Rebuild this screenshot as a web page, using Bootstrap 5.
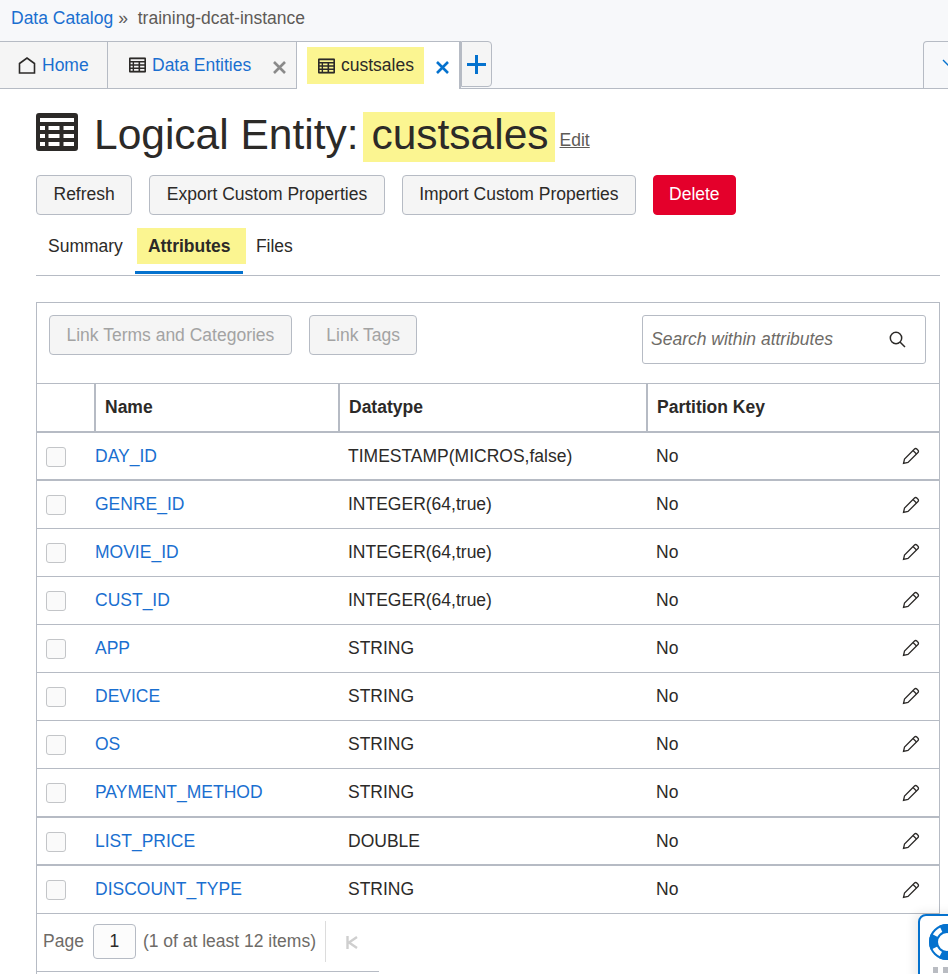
<!DOCTYPE html>
<html lang="en">
<head>
    <meta charset="UTF-8">
    <meta name="viewport" content="width=device-width, initial-scale=1.0">
    <title>Logical Entity: custsales</title>
    <link href="https://cdn.jsdelivr.net/npm/bootstrap@5.3.0/dist/css/bootstrap.min.css" rel="stylesheet">
    <style>
        html, body { height: 974px; overflow: hidden; }
        body {
            font-family: "Liberation Sans", Arial, sans-serif;
            font-size: 17.5px;
            color: #2c2a28;
            background: #fff;
        }
        a { color: #1a6fd0; text-decoration: none; }
        .hl { background: #fbf591; }

        .top-area { background: #f7f8fa; height: 89px; border-bottom: 1px solid #b6bbc4; }
        .crumbs { height: 41px; padding: 0 11px; line-height: 37px; color: #5e5b57; white-space: nowrap; }
        .crumbs .sep { margin: 0 5px; }
        .tab-row { height: 47px; }
        .tab-item {
            height: 47px;
            border-top: 1px solid #b6bbc4;
            border-right: 1px solid #b6bbc4;
            background: #f5f5f5;
            white-space: nowrap;
        }
        .tab-home { width: 108px; padding-left: 18px; }
        .tab-entities { width: 189px; padding-left: 21px; }
        .tab-active { width: 164px; padding-left: 10px; background: #fff; height: 48px; border-right-width: 2px; }
        .tab-label { height: 37px; width: 117px; padding-left: 11px; color: #2c2a28; }
        .tab-icon { margin-right: 6px; }
        .tab-x { margin: 4px 10px 0 auto; }
        .tab-add {
            width: 31px; height: 46px;
            border: 1px solid #b6bbc4;
            border-radius: 0 4px 4px 0; background: #f5f5f5;
        }
        .tab-far {
            width: 40px; height: 47px; margin-left: auto; margin-right: -15px;
            border: 1px solid #b6bbc4; border-bottom: 0; border-radius: 4px 0 0 0;
        }

        .page-body { padding: 0 8px 0 36px; }
        .title-row { height: 86px; padding-top: 23px; }
        .title-icon { margin: 1px 16px 0 0; }
        .title-text { font-size: 42.5px; line-height: 46px; margin: 0; font-weight: 400; color: #2c2a28; white-space: nowrap; }
        .title-name { display: inline-block; padding: 0 6px 4px 8px; margin-left: -7px; }
        .edit-link { color: #5e5b57; text-decoration: underline; margin: 15px 0 0 5px; }

        .act-btn {
            height: 40px; padding: 0 16.5px; font-size: 17.5px; line-height: 36px;
            color: #2c2a28; background: #f5f5f5;
            border: 1px solid #b6bbc4; border-radius: 4px;
            margin-right: 17px;
        }
        .act-btn:disabled { color: #a3a3a3; background: #f5f5f5; border-color: #b6bbc4; opacity: 1; }
        .btn-del { background: #e4002b; border-color: #e4002b; color: #fff; padding: 0 15px; }
        .action-row .act-btn { padding-bottom: 2px; }

        .sub-tabs { height: 61px; border-bottom: 1px solid #b6bbc4; padding-top: 13px; }
        .sub-tab { height: 37px; line-height: 36px; color: #2c2a28; }
        .sub-wrap { height: 46px; }
        .sub-current { width: 108px; border-bottom: 3px solid #0572ce; }
        .sub-current span { display: block; width: 109px; margin-left: 2px; padding-left: 11px; font-weight: 700; }
        .sub-files { margin-left: 9px; }

        .table-box { margin-top: 26px; border: 1px solid #b6bbc4; border-bottom: 0; height: 700px; }
        .tool-row { height: 81px; padding: 12px 13px 0 12px; border-bottom: 1px solid #b6bbc4; }
        .search-box {
            width: 284px; height: 49px; margin-left: auto;
            border: 1px solid #b6bbc4; border-radius: 3px;
            padding: 0 19px 0 8px;
            font-style: italic; color: #6e6b67;
        }

        .attr-table { table-layout: fixed; width: 902px; margin: 0; border-collapse: collapse; }
        .attr-table th, .attr-table td {
            height: 48px; padding: 0 0 0 9px; vertical-align: middle;
            border-bottom: 1px solid #b6bbc4; background: transparent; color: #2c2a28;
            font-size: 17.5px;
        }
        .attr-table th { font-weight: 700; border-bottom-width: 2px; }
        .attr-table th.sep-col { border-left: 2px solid #b6bbc4; }
        .attr-table tr.strong-line td { border-bottom-width: 2px; }
        .attr-table tr.tall-line td { height: 49px; }
        .attr-table td.name-col { padding-left: 0; }
        .attr-table td.pencil-col { padding: 0 19px 0 0; text-align: right; }
        .pencil-col svg { margin-bottom: 2px; }
        .row-check { width: 20px; height: 20px; margin-top: 2px; border: 1px solid #c3c5c8; border-radius: 3px; background: #fafafa; display: block; }

        .pager-row { width: 342px; height: 58px; border-bottom: 1px solid #b6bbc4; padding: 0 0 2px 6px; color: #6e6b67; white-space: nowrap; }
        .page-input { width: 43px; height: 35px; margin: 0 7px 0 9px; border: 1px solid #b6bbc4; border-radius: 4px; color: #2c2a28; background: #fcfcfc; }
        .pager-div { width: 1px; height: 41px; margin-left: 9px; background: #dcdcdc; }
        .pager-first { margin: 2px 0 0 20px; }

        .help-tab {
            position: fixed; left: 918px; top: 914px; width: 60px; height: 80px;
            background: #fff; border: 2px solid #0572ce; border-radius: 8px 0 0 0;
            box-shadow: -4px -2px 10px rgba(0,0,0,.08);
        }
        .help-tab svg { position: absolute; left: 5px; top: 4px; }
        .help-dots { position: absolute; left: 13px; top: 51px; width: 15px; height: 6px; background: repeating-linear-gradient(90deg, #b9bcc2 0 5px, transparent 5px 10px); }
    </style>
</head>
<body>
    <!-- grid icon -->
    <svg width="0" height="0" class="position-absolute">
        <symbol id="grid-icon" viewBox="0 0 42 38">
            <path fill="#2c2a28" fill-rule="evenodd" d="M3 0h36a3 3 0 0 1 3 3v32a3 3 0 0 1-3 3H3a3 3 0 0 1-3-3V3a3 3 0 0 1 3-3zM4 5v4h34V5zM4 13v4h5v-4zM12.500 13v4h11v-4zM27.500 13v4H38v-4zM4 21v4h5v-4zM12.500 21v4h11v-4zM27.500 21v4H38v-4zM4 29v4h5v-4zM12.500 29v4h11v-4zM27.500 29v4H38v-4z"/>
        </symbol>
    </svg>

    <!-- Breadcrumb and tabs -->
    <div class="top-area">
        <div class="crumbs"><a href="#">Data Catalog</a><span class="sep">»</span> training-dcat-instance</div>
        <div class="tab-row d-flex">
            <div class="tab-item tab-home d-flex align-items-center">
                <svg class="tab-icon" width="18" height="17" viewBox="0 0 18 17" fill="none" stroke="#2c2a28" stroke-width="1.6"><path d="M1.500 16V6.500L9 1l7.500 5.500V16z"/></svg>
                <a href="#">Home</a>
            </div>
            <div class="tab-item tab-entities d-flex align-items-center">
                <svg class="tab-icon" width="17" height="16" viewBox="0 0 42 38"><use href="#grid-icon"/></svg>
                <a href="#">Data Entities</a>
                <svg class="tab-x" width="13" height="13" viewBox="0 0 13 13" stroke="#8a8a8a" stroke-width="2.600"><path d="M1 1l11 11M12 1L1 12"/></svg>
            </div>
            <div class="tab-item tab-active d-flex align-items-center">
                <div class="tab-label hl d-flex align-items-center">
                    <svg class="tab-icon" width="17" height="16" viewBox="0 0 42 38"><use href="#grid-icon"/></svg>
                    custsales
                </div>
                <svg class="tab-x" width="13" height="13" viewBox="0 0 13 13" stroke="#0572ce" stroke-width="2.600"><path d="M1 1l11 11M12 1L1 12"/></svg>
            </div>
            <div class="tab-add d-flex align-items-center justify-content-center">
                <svg width="19" height="19" viewBox="0 0 19 19" stroke="#0572ce" stroke-width="3"><path d="M9.500 0v19M0 9.500h19"/></svg>
            </div>
            <div class="tab-far">
                <svg width="30" height="30" viewBox="0 0 30 30" fill="none" stroke="#0572ce" stroke-width="1.400"><path d="M19 18l5 5 5-5"/></svg>
            </div>
        </div>
    </div>

    <div class="page-body">
        <!-- Title -->
        <div class="title-row d-flex align-items-start">
            <svg class="title-icon" width="42" height="38" viewBox="0 0 42 38"><use href="#grid-icon"/></svg>
            <h1 class="title-text">Logical Entity: <span class="title-name hl">custsales</span></h1>
            <a class="edit-link" href="#">Edit</a>
        </div>

        <!-- Actions -->
        <div class="action-row d-flex">
            <button class="btn act-btn" type="button">Refresh</button>
            <button class="btn act-btn" type="button">Export Custom Properties</button>
            <button class="btn act-btn" type="button">Import Custom Properties</button>
            <button class="btn act-btn btn-del" type="button">Delete</button>
        </div>

        <!-- Sub tabs -->
        <div class="sub-tabs d-flex">
            <div class="sub-wrap ms-2 me-2"><div class="sub-tab px-1">Summary</div></div>
            <div class="sub-wrap sub-current"><div class="sub-tab"><span class="hl">Attributes</span></div></div>
            <div class="sub-wrap sub-files"><div class="sub-tab px-1">Files</div></div>
        </div>

        <!-- Attributes -->
        <div class="table-box">
            <div class="tool-row d-flex align-items-start">
                <button class="btn act-btn" type="button" disabled>Link Terms and Categories</button>
                <button class="btn act-btn" type="button" disabled>Link Tags</button>
                <div class="search-box d-flex align-items-center justify-content-between">
                    <span>Search within attributes</span>
                    <svg width="17" height="17" viewBox="0 0 17 17" fill="none" stroke="#2c2a28" stroke-width="1.500"><circle cx="7" cy="7" r="5.700"/><path d="M11 11l5 5"/></svg>
                </div>
            </div>
            <table class="table attr-table">
                <colgroup><col style="width:58px"><col style="width:244px"><col style="width:308px"><col style="width:220px"><col></colgroup>
                <thead>
                    <tr>
                        <th></th>
                        <th class="sep-col">Name</th>
                        <th class="sep-col">Datatype</th>
                        <th class="sep-col" colspan="2">Partition Key</th>
                    </tr>
                </thead>
                <tbody id="attrRows"></tbody>
            </table>
            <div class="pager-row d-flex align-items-center">
                Page
                <div class="page-input d-flex align-items-center justify-content-center">1</div>
                (1 of at least 12 items)
                <div class="pager-div"></div>
                <svg class="pager-first" width="12" height="13" viewBox="0 0 12 13" fill="none" stroke="#cfcfcf" stroke-width="2.400"><path d="M1.500 0v13M11 1L3 6.500l8 5.500"/></svg>
            </div>
        </div>
    </div>

    <!-- Help widget -->
    <div class="help-tab">
        <svg width="44" height="44" viewBox="0 0 44 44" fill="none" stroke="#0572ce">
            <circle cx="22" cy="22" r="17" stroke-width="2"/>
            <circle cx="22" cy="22" r="10" stroke-width="2"/>
            <circle cx="22" cy="22" r="14" stroke-width="8" stroke-dasharray="13 9" stroke-dashoffset="6.500"/>
        </svg>
        <div class="help-dots"></div>
    </div>

    <script src="https://cdn.jsdelivr.net/npm/bootstrap@5.3.0/dist/js/bootstrap.bundle.min.js"></script>
    <script>
        const attrs = [
            ['DAY_ID', 'TIMESTAMP(MICROS,false)', 'strong-line'],
            ['GENRE_ID', 'INTEGER(64,true)', ''],
            ['MOVIE_ID', 'INTEGER(64,true)', ''],
            ['CUST_ID', 'INTEGER(64,true)', ''],
            ['APP', 'STRING', ''],
            ['DEVICE', 'STRING', ''],
            ['OS', 'STRING', ''],
            ['PAYMENT_METHOD', 'STRING', 'strong-line tall-line'],
            ['LIST_PRICE', 'DOUBLE', 'strong-line'],
            ['DISCOUNT_TYPE', 'STRING', '']
        ];
        const pencil = '<svg width="18" height="18" viewBox="0 0 18 18" fill="none" stroke="#2c2a28" stroke-width="1.300"><path d="M1.500 16.500l1-4.500L12.500 2a1.600 1.600 0 0 1 2.300 0l1.200 1.200a1.600 1.600 0 0 1 0 2.300L6 15.500z"/><path d="M11 3.500l3.500 3.500"/></svg>';
        document.getElementById('attrRows').innerHTML = attrs.map(a => `
            <tr class="${a[2]}">
                <td><span class="row-check"></span></td>
                <td class="name-col"><a href="#">${a[0]}</a></td>
                <td>${a[1]}</td>
                <td>No</td>
                <td class="pencil-col">${pencil}</td>
            </tr>`).join('');
    </script>
</body>
</html>
